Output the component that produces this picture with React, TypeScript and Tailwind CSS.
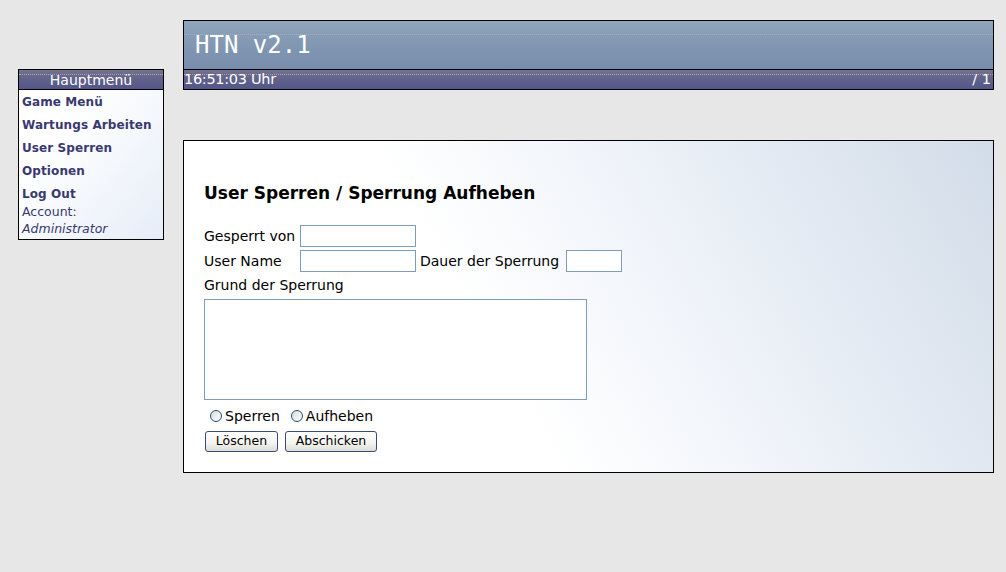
import React from 'react';

const sans = "font-['DejaVu_Sans',Verdana,sans-serif]";

const menuLinks = ['Game Menü', 'Wartungs Arbeiten', 'User Sperren', 'Optionen', 'Log Out'];

function DarkBar({ children, className = '' }: { children: React.ReactNode; className?: string }) {
  return (
    <div
      className={`relative bg-[linear-gradient(to_bottom,#74748e,#62628a_45%,#52568a)] text-white ${className}`}
    >
      <div className="absolute left-0 right-0 top-[4px] border-t border-dotted border-[#a4a4bc]" />
      {children}
    </div>
  );
}

function MainMenu() {
  return (
    <div className="mt-[69px] ml-[18px] w-[146px] h-[171px] border border-black bg-[linear-gradient(to_bottom_right,#ffffff_30%,#e6edf8)]">
      <DarkBar className="h-[20px] border-b border-black flex items-center justify-center">
        <span className={`${sans} text-[14px] leading-none relative`}>Hauptmenü</span>
      </DarkBar>
      <div className={`${sans} pl-[3px] pt-[1px] text-[#393970]`}>
        {menuLinks.map((label) => (
          <a key={label} href="#" className="block h-[23px] leading-[23px] text-[12px] font-bold tracking-[0.1px]">
            {label}
          </a>
        ))}
        <div className="text-[12.5px] leading-[17px] -mt-[3px]">Account:</div>
        <div className="text-[12.5px] leading-[17px] italic">Administrator</div>
      </div>
    </div>
  );
}

function Header() {
  return (
    <div className="w-[811px] h-[70px] border border-black">
      <div className="relative h-[49px] bg-[linear-gradient(to_bottom,#90a4ba,#8197b2_50%,#788dab)] border-b border-black flex items-center pl-[11px]">
        <div className="absolute left-0 right-0 top-[13px] border-t border-dotted border-[#9fb0c4]" />
        <span className="relative font-['DejaVu_Sans_Mono',monospace] text-[24px] text-white leading-none">HTN v2.1</span>
      </div>
      <DarkBar className="h-[19px] flex items-center justify-between">
        <span className={`${sans} relative text-[14.5px] leading-none -tracking-[0.3px]`}>16:51:03 Uhr</span>
        <span className={`${sans} relative text-[14.5px] leading-none pr-[2px]`}>/ 1</span>
      </DarkBar>
    </div>
  );
}

function RadioOption({ label }: { label: string }) {
  return (
    <label className="flex items-center">
      <span className="w-[12px] h-[12px] rounded-full border border-[#1c5180] bg-[linear-gradient(to_bottom_right,#dcdcd6,#ffffff)] mr-[3px]" />
      <span>{label}</span>
    </label>
  );
}

function XpButton({ label, width }: { label: string; width: string }) {
  return (
    <button
      className={`${width} h-[21px] rounded-[3px] border border-[#3c4a78] bg-[linear-gradient(to_bottom,#ffffff,#f3f3ef_60%,#dcdcd4)] text-[12.5px] text-black leading-none`}
    >
      {label}
    </button>
  );
}

function BanForm() {
  return (
    <div className={`w-[811px] h-[333px] mt-[50px] border border-black bg-[linear-gradient(60deg,#ffffff_38%,#f0f4fa_60%,#d2dce8)] pl-[20px] pt-[40px] ${sans} text-[14px] text-black`}>
      <h1 className="h-[24px] leading-[24px] text-[17px] font-bold">User Sperren / Sperrung Aufheben</h1>
      <div className="mt-[20px] flex items-center h-[22px]">
        <span className="w-[96px]">Gesperrt von</span>
        <input className="w-[116px] h-[22px] border border-[#7f9db9] bg-white" />
      </div>
      <div className="mt-[3px] flex items-center h-[22px]">
        <span className="w-[96px]">User Name</span>
        <input className="w-[116px] h-[22px] border border-[#7f9db9] bg-white" />
        <span className="w-[150px] pl-[4px]">Dauer der Sperrung</span>
        <input className="w-[56px] h-[22px] border border-[#7f9db9] bg-white" />
      </div>
      <div className="mt-[3px] h-[20px] leading-[20px]">Grund der Sperrung</div>
      <textarea className="mt-[4px] block w-[383px] h-[101px] border border-[#7f9db9] bg-white resize-none" />
      <div className="mt-[7px] h-[18px] flex items-center gap-[11px] pl-[6px]">
        <RadioOption label="Sperren" />
        <RadioOption label="Aufheben" />
      </div>
      <div className="mt-[6px] flex gap-[7px] pl-[1px]">
        <XpButton label="Löschen" width="w-[73px]" />
        <XpButton label="Abschicken" width="w-[92px]" />
      </div>
    </div>
  );
}

export default function App() {
  return (
    <div className="min-h-[572px] w-full bg-[#e7e7e7] flex items-start">
      <MainMenu />
      <div className="ml-[19px] mt-[20px]">
        <Header />
        <BanForm />
      </div>
    </div>
  );
}
